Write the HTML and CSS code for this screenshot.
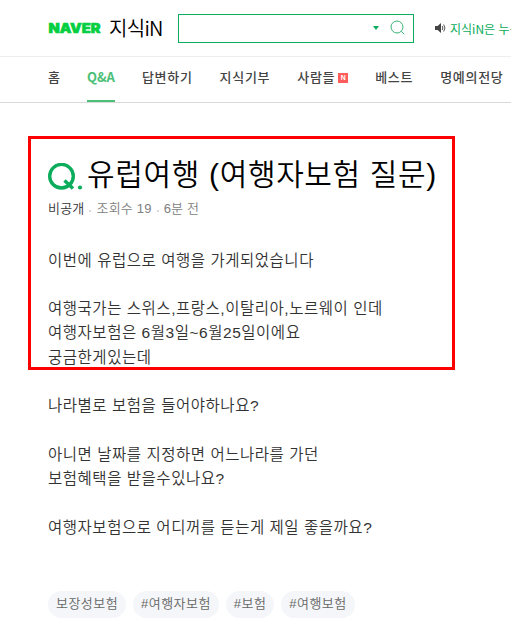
FILE: index.html
```html
<!DOCTYPE html>
<html lang="ko">
<head>
    <meta charset="UTF-8">
    <title>유럽여행 (여행자보험 질문) : 지식iN</title>
    <link rel="stylesheet" href="styles.css">
</head>
<body>
<div class="header">
    <svg class="naver" width="53" height="12" viewBox="0 0 53 12">
        <text x="0.5" y="11" textLength="52" lengthAdjust="spacingAndGlyphs">NAVER</text>
    </svg>
    <h1>지식iN</h1>
    <div class="search">
        <span class="arrow"></span>
        <svg width="16" height="16" viewBox="0 0 16 16">
            <circle cx="7" cy="7" r="6"/>
            <path d="M11.3 11.3L14.3 14.3"/>
        </svg>
    </div>
    <div class="notice">
        <svg width="11" height="10" viewBox="0 0 11 10">
            <path class="body" d="M0 3h2.6L6 0v10L2.6 7H0z"/>
            <path class="wave" d="M7.2 3Q8.5 5 7.2 7M8.7 1.5Q11.2 5 8.7 8.5"/>
        </svg>
        <span>지식iN은 누구</span>
    </div>
</div>
<ul class="nav">
    <li class="home">홈</li>
    <li class="on">Q&amp;A</li>
    <li>답변하기</li>
    <li>지식기부</li>
    <li>사람들<span class="new">N</span></li>
    <li>베스트</li>
    <li>명예의전당</li>
</ul>
<div class="question">
    <div class="mark"></div>
    <div class="title">
        <svg width="35" height="28" viewBox="0 0 35 28">
            <circle cx="13.5" cy="13.2" r="11.8"/>
            <path d="M16.5 17.5L25 25.6"/>
            <circle class="dot" cx="32" cy="24.5" r="2.1"/>
        </svg>
        <h2>유럽여행 (여행자보험 질문)</h2>
    </div>
    <p class="info"><span class="writer">비공개</span><i></i><span>조회수 19</span><i></i><span>6분 전</span></p>
    <div class="text">
        <p>이번에 유럽으로 여행을 가게되었습니다</p>
        <p><br></p>
        <p>여행국가는 스위스,프랑스,이탈리아,노르웨이 인데</p>
        <p>여행자보험은 6월3일~6월25일이에요</p>
        <p>궁금한게있는데</p>
        <p><br></p>
        <p>나라별로 보험을 들어야하나요?</p>
        <p><br></p>
        <p>아니면 날짜를 지정하면 어느나라를 가던</p>
        <p>보험혜택을 받을수있나요?</p>
        <p><br></p>
        <p>여행자보험으로 어디꺼를 듣는게 제일 좋을까요?</p>
    </div>
    <ul class="tags">
        <li>보장성보험</li>
        <li>#여행자보험</li>
        <li>#보험</li>
        <li>#여행보험</li>
    </ul>
</div>
</body>
</html>
```
FILE: styles.css
```css
body,ul,p,h1,h2{margin: 0;padding: 0;}
li{list-style: none;}
body{width: 511px;height: 629px;overflow: hidden;background: #fff;color: #333;font-family: "Liberation Sans","Noto Sans CJK KR",sans-serif;white-space: nowrap;}
svg{display: block;flex: none;}

.header{display: flex;align-items: center;height: 56px;padding-left: 48px;border-bottom: 1px solid #eee;}
.naver{overflow: visible;}
.naver text{font: 900 13px Inter,sans-serif;fill: #03cf40;stroke: #03cf40;stroke-width: 0.6;}
.header h1{width: 53px;margin: 0 16px 0 8px;font: 350 20px/28px "Noto Sans CJK KR",sans-serif;color: #000;letter-spacing: -0.7px;}
.search{display: flex;align-items: center;justify-content: flex-end;box-sizing: border-box;width: 236px;height: 29px;padding-right: 7px;border: 1px solid #0bac5b;flex: none;}
.search .arrow{border: 3.5px solid transparent;border-top: 4px solid #0bac5b;border-bottom: 0;margin-right: 11px;}
.search svg{fill: none;stroke: #3bb377;stroke-width: 1;}
.notice{display: flex;align-items: center;margin-left: 21px;font: 400 12px/18px "Noto Sans CJK KR",sans-serif;color: #0bac5b;}
.notice svg{margin-right: 4px;}
.notice span{padding-top: 1px;}
.notice .body{fill: #444;}
.notice .wave{fill: none;stroke: #555;}

.nav{display: flex;height: 45px;padding-left: 48px;border-bottom: 1px solid #d9d9d9;gap: 27px;font: 500 13px/39px "Noto Sans CJK KR",sans-serif;color: #444;letter-spacing: 0.7px;}
.nav li{flex: none;}
.nav .home,.nav .on{letter-spacing: 0;}
.nav .on{box-sizing: border-box;color: #4bc076;border-bottom: 2px solid #4bc076;font-weight: 700;}
.nav .new{display: inline-block;width: 10px;height: 10px;margin-left: 3px;background: #ff5c5c;color: #fff;font: 700 7px/10px "Liberation Sans",sans-serif;letter-spacing: 0;text-align: center;vertical-align: 2px;}

.question{position: relative;padding: 50px 0 0 48px;}
.mark{position: absolute;left: 28px;top: 33px;width: 421px;height: 228px;border: 3px solid #f00;}
.title{display: flex;align-items: center;height: 44px;}
.title svg{margin-top: 3px;fill: none;stroke: #0bac5b;stroke-width: 3.4;}
.title .dot{fill: #0bac5b;stroke: none;}
.title h2{margin-left: 4px;font: 350 30px/44px "Liberation Sans","Noto Sans CJK KR",sans-serif;color: #000;letter-spacing: 0.65px;}
.info{display: flex;align-items: center;height: 23px;padding-bottom: 1px;font: 350 13px/23px "Liberation Sans","Noto Sans CJK KR",sans-serif;color: #808080;letter-spacing: 0.2px;}
.info .writer{color: #333;}
.info i{width: 2px;height: 2px;margin: 4px 5px 0;background: #d8d8d8;}
.text{padding-top: 27.5px;font-weight: 350;font-size: 15.5px;line-height: 24.3px;letter-spacing: 0.53px;}
.text p{height: 24.3px;}
.tags{display: flex;gap: 7px;padding-top: 50.5px;}
.tags li{height: 27px;padding: 0 8px;border-radius: 14px;background: #f4f6f9;color: #666;font-size: 13px;font-weight: 350;line-height: 25px;letter-spacing: 0.45px;}
```
